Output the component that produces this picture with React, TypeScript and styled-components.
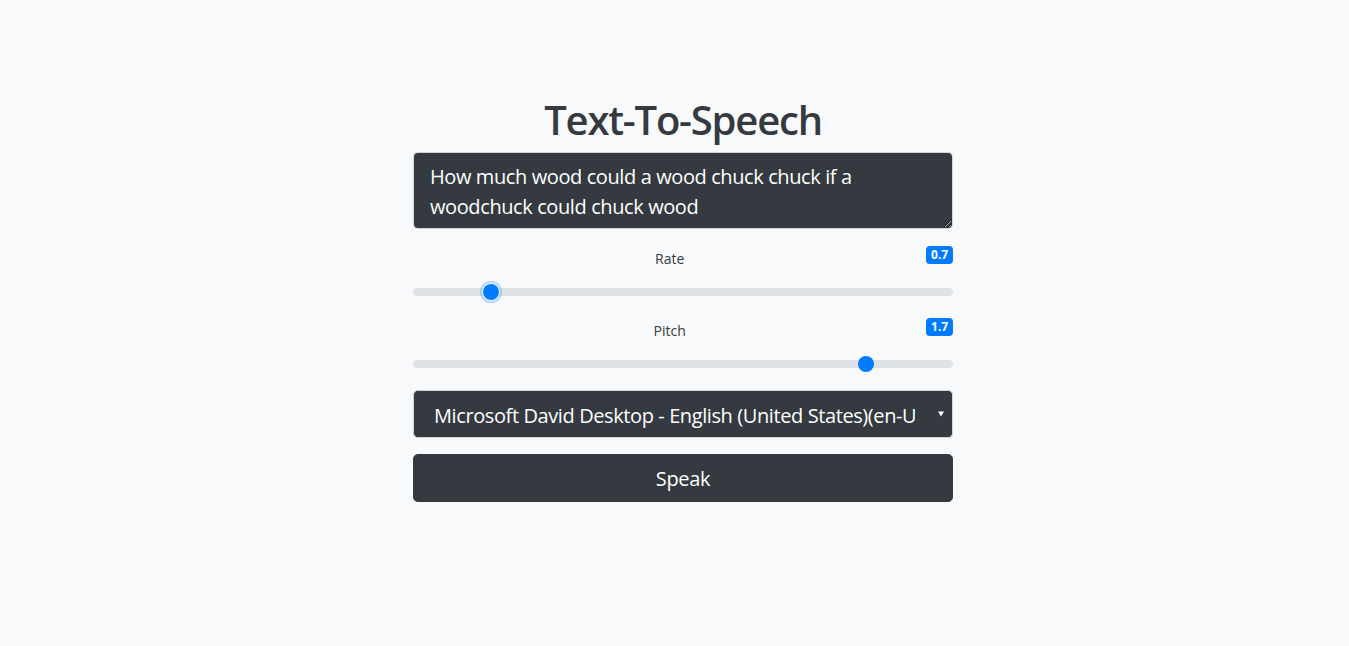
import React, { useState } from "react";
import styled, { createGlobalStyle } from "styled-components";

const Global = createGlobalStyle`
  html, body { margin: 0; padding: 0; }
  body {
    background: #f8f9fa;
    font-family: "Open Sans", "Noto Sans", sans-serif;
    color: #212529;
    min-height: 100vh;
  }
`;

const Page = styled.main`
  display: flex;
  justify-content: center;
  padding: 96px 0 0 17px;
`;

const Column = styled.div`
  width: 540px;
  display: flex;
  flex-direction: column;
`;

const Title = styled.h1`
  margin: 0 0 8px;
  font-size: 40px;
  line-height: 48px;
  font-weight: 600;
  letter-spacing: -1.2px;
  color: #343a40;
  text-align: center;
`;

const TextArea = styled.textarea`
  box-sizing: border-box;
  width: 100%;
  height: 77px;
  margin: 0 0 16px;
  padding: 9px 16px 7px;
  font-family: inherit;
  font-size: 20px;
  line-height: 30px;
  letter-spacing: -0.4px;
  color: #fff;
  background: #343a40;
  border: 1px solid #ced4da;
  border-radius: 4.8px;
  resize: vertical;
  outline: none;
`;

const Group = styled.div`
  display: flex;
  flex-direction: column;
  margin-bottom: 14px;
`;

const LabelRow = styled.div`
  height: 28px;
  display: flex;
  align-items: flex-start;
`;

const Label = styled.label`
  flex: 1;
  text-align: center;
  font-size: 14px;
  line-height: 27px;
  color: #343a40;
`;

const Badge = styled.span`
  margin-top: 1px;
  background: #007bff;
  color: #fff;
  font-size: 12px;
  font-weight: 700;
  line-height: 12px;
  padding: 3px 4.8px;
  border-radius: 4px;
`;

const Range = styled.input<{ $focus?: boolean }>`
  -webkit-appearance: none;
  appearance: none;
  width: 100%;
  height: 22px;
  margin: 8px 0 0;
  padding: 0;
  background: transparent;
  outline: none;

  &::-webkit-slider-runnable-track {
    height: 8px;
    background: #dee2e6;
    border-radius: 16px;
  }
  &::-webkit-slider-thumb {
    -webkit-appearance: none;
    appearance: none;
    width: 16px;
    height: 16px;
    margin-top: -4px;
    border: 0;
    border-radius: 50%;
    background: #007bff;
    box-shadow: ${(p) =>
      p.$focus ? "0 0 0 1px #f8f9fa, 0 0 0 3.2px rgba(0,123,255,.25)" : "none"};
  }
`;

const SelectWrap = styled.div`
  position: relative;
  margin: 1px 0 16px;
`;

const Select = styled.select`
  -webkit-appearance: none;
  appearance: none;
  box-sizing: border-box;
  width: 100%;
  height: 48px;
  padding: 2px 37px 0 20px;
  font-family: inherit;
  font-size: 20px;
  letter-spacing: -0.4px;
  color: #fff;
  background: #343a40;
  border: 1px solid #ced4da;
  border-radius: 4.8px;
  outline: none;
`;

const Arrow = styled.span`
  position: absolute;
  right: 9px;
  top: 50%;
  transform: translateY(-50%);
  width: 0;
  height: 0;
  border-left: 3px solid transparent;
  border-right: 3px solid transparent;
  border-top: 5px solid #fff;
  pointer-events: none;
`;

const Button = styled.button`
  box-sizing: border-box;
  width: 100%;
  height: 48px;
  font-family: inherit;
  font-size: 20px;
  letter-spacing: -0.3px;
  color: #fff;
  background: #343a40;
  border: 1px solid #343a40;
  border-radius: 4.8px;
  cursor: pointer;
`;

export default function App() {
  const [text, setText] = useState(
    "How much wood could a wood chuck chuck if a woodchuck could chuck wood"
  );
  const [rate, setRate] = useState(0.7);
  const [pitch, setPitch] = useState(1.7);
  return (
    <>
      <Global />
      <Page>
        <Column>
          <Title>Text-To-Speech</Title>
          <TextArea value={text} onChange={(e) => setText(e.target.value)} />
          <Group>
            <LabelRow>
              <Label htmlFor="rate">Rate</Label>
              <Badge>{rate.toFixed(1)}</Badge>
            </LabelRow>
            <Range
              id="rate"
              type="range"
              min={0.5}
              max={2}
              step={0.1}
              value={rate}
              $focus
              onChange={(e) => setRate(parseFloat(e.target.value))}
            />
          </Group>
          <Group>
            <LabelRow>
              <Label htmlFor="pitch">Pitch</Label>
              <Badge>{pitch.toFixed(1)}</Badge>
            </LabelRow>
            <Range
              id="pitch"
              type="range"
              min={0}
              max={2}
              step={0.1}
              value={pitch}
              onChange={(e) => setPitch(parseFloat(e.target.value))}
            />
          </Group>
          <SelectWrap>
            <Select defaultValue="david">
              <option value="david">
                Microsoft David Desktop - English (United States)(en-US)
              </option>
            </Select>
            <Arrow />
          </SelectWrap>
          <Button>Speak</Button>
        </Column>
      </Page>
    </>
  );
}
